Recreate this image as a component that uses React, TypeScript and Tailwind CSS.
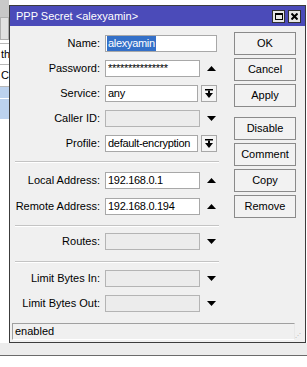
import type { ReactNode } from 'react';

const font = { fontFamily: '"Liberation Sans", Arial, sans-serif' };

function UpArrow() {
  return (
    <svg width="9" height="5" viewBox="0 0 9 5">
      <polygon points="0,5 4.5,0 9,5" fill="#000" />
    </svg>
  );
}

function DownArrow() {
  return (
    <svg width="9" height="5" viewBox="0 0 9 5">
      <polygon points="0,0 9,0 4.5,5" fill="#000" />
    </svg>
  );
}

function ComboIcon() {
  return (
    <svg width="8" height="9" viewBox="0 0 8 9">
      <rect x="0" y="0" width="8" height="1.5" fill="#000" />
      <rect x="3" y="1.5" width="2" height="2.5" fill="#000" />
      <polygon points="0,4 8,4 4,9" fill="#000" />
    </svg>
  );
}

function Field({ label, children }: { label: string; children: ReactNode }) {
  return (
    <div className="flex items-center h-[17px]">
      <div className="w-[95px] pr-[5px] text-right text-[11px] text-black leading-none whitespace-nowrap">{label}</div>
      {children}
    </div>
  );
}

function Box({ value, w, disabled }: { value?: string; w: string; disabled?: boolean }) {
  return (
    <div
      className={`${w} h-[17px] border flex items-center px-[2px] text-[11px] tracking-[-0.3px] leading-none whitespace-nowrap overflow-hidden ${
        disabled ? 'bg-[#ececec] border-[#b4b4b4]' : 'bg-white border-[#a8a8a8]'
      }`}
    >
      {value}
    </div>
  );
}

function Arrow({ up }: { up?: boolean }) {
  return <div className="w-[22px] flex justify-center">{up ? <UpArrow /> : <DownArrow />}</div>;
}

function Combo() {
  return (
    <div className="ml-[3px] w-[16px] h-[17px] border border-[#a8a8a8] bg-[#f4f4f4] flex items-center justify-center">
      <ComboIcon />
    </div>
  );
}

function Sep({ mt, mb }: { mt: string; mb: string }) {
  return (
    <div className={`${mt} ${mb} ml-[5px] w-[204px]`}>
      <div className="h-px bg-[#c4c4c4]" />
      <div className="h-px bg-white" />
    </div>
  );
}

function Btn({ label, mt }: { label: string; mt: string }) {
  return (
    <div
      className={`${mt} h-[23px] w-[62px] border border-[#8a8a8a] bg-[#f2f2f2] flex items-center justify-center text-[11px] text-black`}
    >
      {label}
    </div>
  );
}

export default function App() {
  return (
    <div className="relative w-[307px] h-[367px] bg-white overflow-hidden" style={font}>
      <div className="flex flex-col h-full">
        <div className="h-[342px] flex">
          <div className="w-[9px] flex flex-col text-[11px] overflow-hidden">
            <div className="h-[17px] bg-[#c8c8c8]" />
            <div className="h-[23px] bg-[#e2e2e2] border border-[#b0b0b0]" />
            <div className="h-[3px] bg-white" />
            <div className="h-[21px] bg-white border-t border-[#b8b8b8] flex items-center pl-px">th</div>
            <div className="h-[22px] bg-white border-t border-[#b8b8b8] flex items-center pl-px">Ca</div>
            <div className="h-[12px] bg-[#bcd2ee] border-t border-[#b8b8b8]" />
            <div className="h-px bg-white" />
            <div className="h-[20px] bg-[#bcd2ee]" />
            <div className="flex-1 bg-white" />
          </div>
        </div>
        <div className="h-[13px] bg-[#ececec] border-t border-[#ffffff]" />
        <div className="h-px bg-[#6a6a6a]" />
        <div className="flex-1 bg-white" />
      </div>

      <div className="absolute left-[9px] top-[5px] w-[297px] h-[338px] border border-[#3c3c3c] bg-[#f0f0f0] flex flex-col">
        <div className="h-[20px] bg-[#4b4bb9] flex items-center pl-[6px] pr-[4px] text-white text-[11px]">
          <span className="flex-1">PPP Secret &lt;alexyamin&gt;</span>
          <div className="w-[13px] h-[13px] bg-[#e6e6e6] border border-[#303030] flex items-center justify-center">
            <div className="w-[8px] h-[7px] border border-black border-t-2" />
          </div>
          <div className="ml-[3px] w-[13px] h-[13px] bg-[#e6e6e6] border border-[#303030] flex items-center justify-center">
            <svg width="7" height="7" viewBox="0 0 7 7">
              <path d="M0.5 0.5 L6.5 6.5 M6.5 0.5 L0.5 6.5" stroke="#000" strokeWidth="2" />
            </svg>
          </div>
        </div>

        <div className="flex flex-1">
          <div className="w-[224px] flex flex-col pt-[9px]">
            <Field label="Name:">
              <div className="w-[112px] h-[17px] border border-[#a8a8a8] bg-white flex items-center px-[1px] text-[11px] tracking-[-0.3px] leading-none">
                <span className="bg-[#3470c8] text-white px-[1px] py-[2px]">alexyamin</span>
              </div>
            </Field>
            <div className="mt-[8px]">
              <Field label="Password:">
                <Box w="w-[95px]" value="***************" />
                <Arrow up />
              </Field>
            </div>
            <div className="mt-[8px]">
              <Field label="Service:">
                <Box w="w-[93px]" value="any" />
                <Combo />
              </Field>
            </div>
            <div className="mt-[8px]">
              <Field label="Caller ID:">
                <Box w="w-[95px]" disabled />
                <Arrow />
              </Field>
            </div>
            <div className="mt-[8px]">
              <Field label="Profile:">
                <Box w="w-[93px]" value="default-encryption" />
                <Combo />
              </Field>
            </div>
            <Sep mt="mt-[9px]" mb="mb-[9px]" />
            <Field label="Local Address:">
              <Box w="w-[95px]" value="192.168.0.1" />
              <Arrow up />
            </Field>
            <div className="mt-[9px]">
              <Field label="Remote Address:">
                <Box w="w-[95px]" value="192.168.0.194" />
                <Arrow up />
              </Field>
            </div>
            <Sep mt="mt-[10px]" mb="mb-[6px]" />
            <Field label="Routes:">
              <Box w="w-[95px]" disabled />
              <Arrow />
            </Field>
            <Sep mt="mt-[11px]" mb="mb-[7px]" />
            <Field label="Limit Bytes In:">
              <Box w="w-[95px]" disabled />
              <Arrow />
            </Field>
            <div className="mt-[8px]">
              <Field label="Limit Bytes Out:">
                <Box w="w-[95px]" disabled />
                <Arrow />
              </Field>
            </div>
          </div>

          <div className="flex flex-col pt-[6px]">
            <Btn label="OK" mt="mt-0" />
            <Btn label="Cancel" mt="mt-[3px]" />
            <Btn label="Apply" mt="mt-[3px]" />
            <Btn label="Disable" mt="mt-[10px]" />
            <Btn label="Comment" mt="mt-[3px]" />
            <Btn label="Copy" mt="mt-[3px]" />
            <Btn label="Remove" mt="mt-[3px]" />
          </div>
        </div>

        <div className="mx-[2px] mb-[2px] flex items-end">
          <div className="flex-1 h-[17px] border border-[#a0a0a0] border-r-[#e8e8e8] border-b-[#ffffff] flex items-center px-[2px] text-[11px] leading-none">
            enabled
          </div>
          <div className="w-[8px] h-[8px] text-[6px] text-[#b0b0b0] leading-none">⋰</div>
        </div>
      </div>
    </div>
  );
}
